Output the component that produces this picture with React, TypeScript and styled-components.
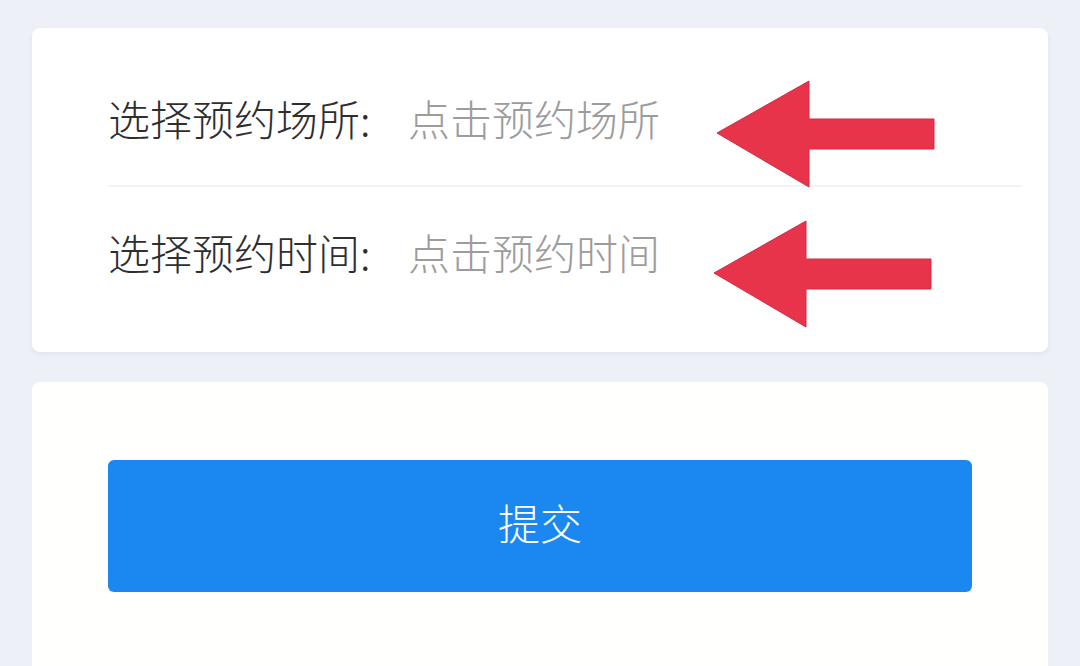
import React from "react";
import styled, { createGlobalStyle } from "styled-components";

const GlobalStyle = createGlobalStyle`
  html, body {
    margin: 0;
    padding: 0;
    background: #eef0f7;
    overflow: hidden;
  }
  body {
    font-family: "Noto Sans CJK SC", "Noto Sans", sans-serif;
  }
`;

const Arrow = () => (
  <svg width="222" height="110" viewBox="0 0 222 110">
    <polygon
      points="2,53 94,1 94,39 219,39 219,69 94,69 94,107"
      fill="#e8344a"
      stroke="#d42a40"
      strokeWidth="1"
    />
  </svg>
);

const rows = [
  { label: "选择预约场所:", placeholder: "点击预约场所" },
  { label: "选择预约时间:", placeholder: "点击预约时间" },
];

export default function App() {
  return (
    <Page>
      <GlobalStyle />
      <FormCard>
        {rows.map((r, i) => (
          <Row key={r.label} first={i === 0}>
            <Label>{r.label}</Label>
            <Placeholder>{r.placeholder}</Placeholder>
            <Pointer first={i === 0}>
              <Arrow />
            </Pointer>
          </Row>
        ))}
      </FormCard>
      <SubmitCard>
        <SubmitButton>提交</SubmitButton>
      </SubmitCard>
    </Page>
  );
}

const Page = styled.div`
  display: flex;
  flex-direction: column;
  gap: 30px;
  padding: 28px 32px 0;
  height: 666px;
  box-sizing: border-box;
`;

const FormCard = styled.div`
  background: #ffffff;
  border-radius: 8px;
  padding: 0 26px 0 76px;
  box-shadow: 0 2px 4px rgba(200, 204, 216, 0.35);
`;

const Row = styled.div<{ first: boolean }>`
  position: relative;
  display: flex;
  align-items: center;
  box-sizing: border-box;
  height: ${(p) => (p.first ? 159 : 165)}px;
  padding: ${(p) => (p.first ? "22px 0 0" : "0 0 36px")};
  border-bottom: ${(p) => (p.first ? "2px solid #f3f3f5" : "none")};
  font-size: 42px;
  font-weight: 300;
`;

const Label = styled.span`
  width: 300px;
  color: #2e2e2e;
`;

const Placeholder = styled.span`
  color: #9c9c9c;
`;

const Pointer = styled.div<{ first: boolean }>`
  position: absolute;
  left: ${(p) => (p.first ? 607 : 604)}px;
  top: ${(p) => (p.first ? 52 : 33)}px;
  line-height: 0;
`;

const SubmitCard = styled.div`
  flex: 1;
  background: #fffffd;
  border-radius: 8px 8px 0 0;
  padding: 78px 76px 0;
`;

const SubmitButton = styled.button`
  display: block;
  width: 100%;
  height: 132px;
  padding: 0 0 10px;
  border: none;
  border-radius: 6px;
  background: #1b87f0;
  color: #ffffff;
  font-family: "Noto Sans CJK SC", "Noto Sans", sans-serif;
  font-size: 42px;
  font-weight: 300;
  cursor: pointer;
`;
